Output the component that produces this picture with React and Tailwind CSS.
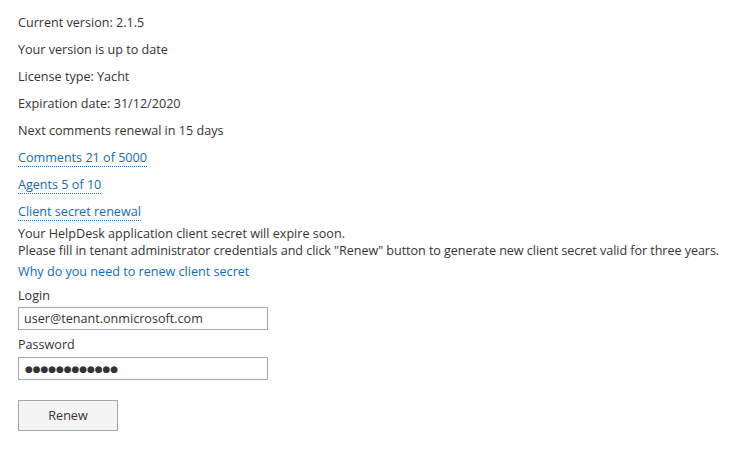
export default function App() {
  const lines = [
    'Current version: 2.1.5',
    'Your version is up to date',
    'License type: Yacht',
    'Expiration date: 31/12/2020',
    'Next comments renewal in 15 days',
  ];
  const links = ['Comments 21 of 5000', 'Agents 5 of 10', 'Client secret renewal'];

  return (
    <div
      className="w-[740px] h-[460px] bg-white text-[#333333] text-[12.6px] leading-[18px] px-[18px] pt-[14px]"
      style={{ fontFamily: '"Open Sans", "Noto Sans", sans-serif' }}
    >
      {lines.map((t) => (
        <p key={t} className="mb-[9px]">{t}</p>
      ))}
      {links.map((t, i) => (
        <p key={t} className={i === 2 ? 'mb-[4px]' : 'mb-[9px]'}>
          <a className="text-[#0f6cbd] border-b border-dotted border-[#0f6cbd] cursor-pointer">{t}</a>
        </p>
      ))}
      <p className="leading-[17px]">Your HelpDesk application client secret will expire soon.</p>
      <p className="leading-[17px] mb-[4px] whitespace-nowrap tracking-[-0.06px]">
        Please fill in tenant administrator credentials and click "Renew" button to generate new client secret valid for three years.
      </p>
      <p className="mb-[6px]">
        <a className="text-[#0f6cbd] cursor-pointer">Why do you need to renew client secret</a>
      </p>
      <label className="block mb-[2px]">Login</label>
      <input
        defaultValue="user@tenant.onmicrosoft.com"
        className="block w-[250px] h-[23px] border border-[#a6a6a6] px-[5px] text-[12.6px] text-[#333333] outline-none"
      />
      <label className="block mt-[6px] mb-[3px]">Password</label>
      <input
        defaultValue="●●●●●●●●●●●●"
        className="block w-[250px] h-[23px] border border-[#a6a6a6] px-[6px] text-[9px] tracking-[-0.1px] text-[#333333] outline-none"
        style={{ fontFamily: '"DejaVu Sans", sans-serif' }}
      />
      <button className="block mt-[20px] w-[100px] h-[31px] bg-[#f4f4f4] border border-[#a6a6a6] text-[12.6px] text-[#333333]">
        Renew
      </button>
    </div>
  );
}
